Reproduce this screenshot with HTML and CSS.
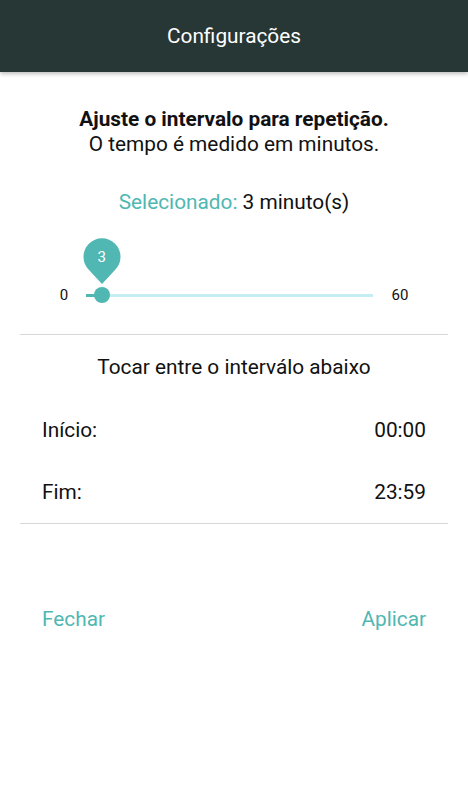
FILE: index.html
```html
<!DOCTYPE html>
<html lang="pt">
<head>
    <meta charset="UTF-8">
    <title>Configurações</title>
    <link rel="stylesheet" href="styles.css">
</head>
<body>
    <div class="toolbar">Configurações</div>

    <div class="content">
        <div class="intro">
            <strong>Ajuste o intervalo para repetição.</strong><br>
            O tempo é medido em minutos.
        </div>

        <div class="selected">
            <span class="accent">Selecionado:</span> 3 minuto(s)
        </div>

        <div class="slider-row">
            <span class="slider-min">0</span>
            <div class="track">
                <div class="track-fill" style="width: 5.5%"></div>
                <div class="thumb" style="left: 5.5%">
                    <div class="pin">
                        <svg width="38" height="46" viewBox="0 0 38 46">
                            <path d="M19 46 L6 32 A18.5 18.5 0 1 1 32 32 Z" fill="#50b7b2"/>
                        </svg>
                        <span class="pin-value">3</span>
                    </div>
                </div>
            </div>
            <span class="slider-max">60</span>
        </div>

        <hr class="divider">

        <div class="subtitle">Tocar entre o interválo abaixo</div>

        <div class="time-row">
            <span>Início:</span>
            <span>00:00</span>
        </div>
        <div class="time-row">
            <span>Fim:</span>
            <span>23:59</span>
        </div>

        <hr class="divider">

        <div class="actions">
            <button class="btn-text">Fechar</button>
            <button class="btn-text">Aplicar</button>
        </div>
    </div>
</body>
</html>
```

FILE: styles.css
```css
body {
    margin: 0;
    background-color: #ffffff;
    color: #111111;
    font-family: Roboto, 'Noto Sans', sans-serif;
}

.toolbar {
    height: 72px;
    display: flex;
    align-items: center;
    justify-content: center;
    background-color: #273736;
    color: #ffffff;
    font-size: 20.8px;
    box-shadow: 0 2px 4px rgba(0, 0, 0, 0.25);
}

.content {
    padding: 0 20px;
}

.intro {
    margin-top: 35px;
    text-align: center;
    font-size: 20.8px;
    line-height: 25px;
}

.selected {
    margin-top: 33px;
    text-align: center;
    font-size: 20.8px;
    line-height: 24px;
}

.accent {
    color: #50b7b2;
}

.slider-row {
    display: flex;
    align-items: center;
    height: 20px;
    margin: 71px 32px 0;
    font-size: 15px;
}

.slider-min {
    width: 24px;
    margin-right: 10px;
    text-align: center;
}

.slider-max {
    width: 32px;
    margin-left: 11px;
    text-align: center;
}

.track {
    position: relative;
    flex: 1;
    height: 3px;
    background-color: #c4eef2;
}

.track-fill {
    height: 100%;
    background-color: #50b7b2;
}

.thumb {
    position: absolute;
    top: 50%;
    width: 16px;
    height: 16px;
    margin: -8px 0 0 -8px;
    border-radius: 50%;
    background-color: #50b7b2;
}

.pin {
    position: absolute;
    left: -11px;
    bottom: 19px;
    width: 38px;
    height: 46px;
}

.pin svg {
    display: block;
}

.pin-value {
    position: absolute;
    top: 9px;
    left: 0;
    width: 38px;
    text-align: center;
    color: #ffffff;
    font-size: 15px;
    line-height: 20px;
}

.divider {
    margin: 0;
    border: none;
    border-top: 1px solid #d8d8d8;
}

.slider-row + .divider {
    margin-top: 29px;
}

.subtitle {
    margin: 20px 0;
    text-align: center;
    font-size: 20.8px;
    line-height: 24px;
}

.time-row {
    display: flex;
    justify-content: space-between;
    align-items: center;
    height: 62px;
    padding: 0 22px;
    font-size: 20.8px;
}

.actions {
    display: flex;
    justify-content: space-between;
    margin-top: 83px;
    padding: 0 22px;
}

.btn-text {
    padding: 0;
    border: none;
    background: none;
    color: #50b7b2;
    font-family: inherit;
    font-size: 20.8px;
    line-height: 24px;
    cursor: pointer;
}
```
